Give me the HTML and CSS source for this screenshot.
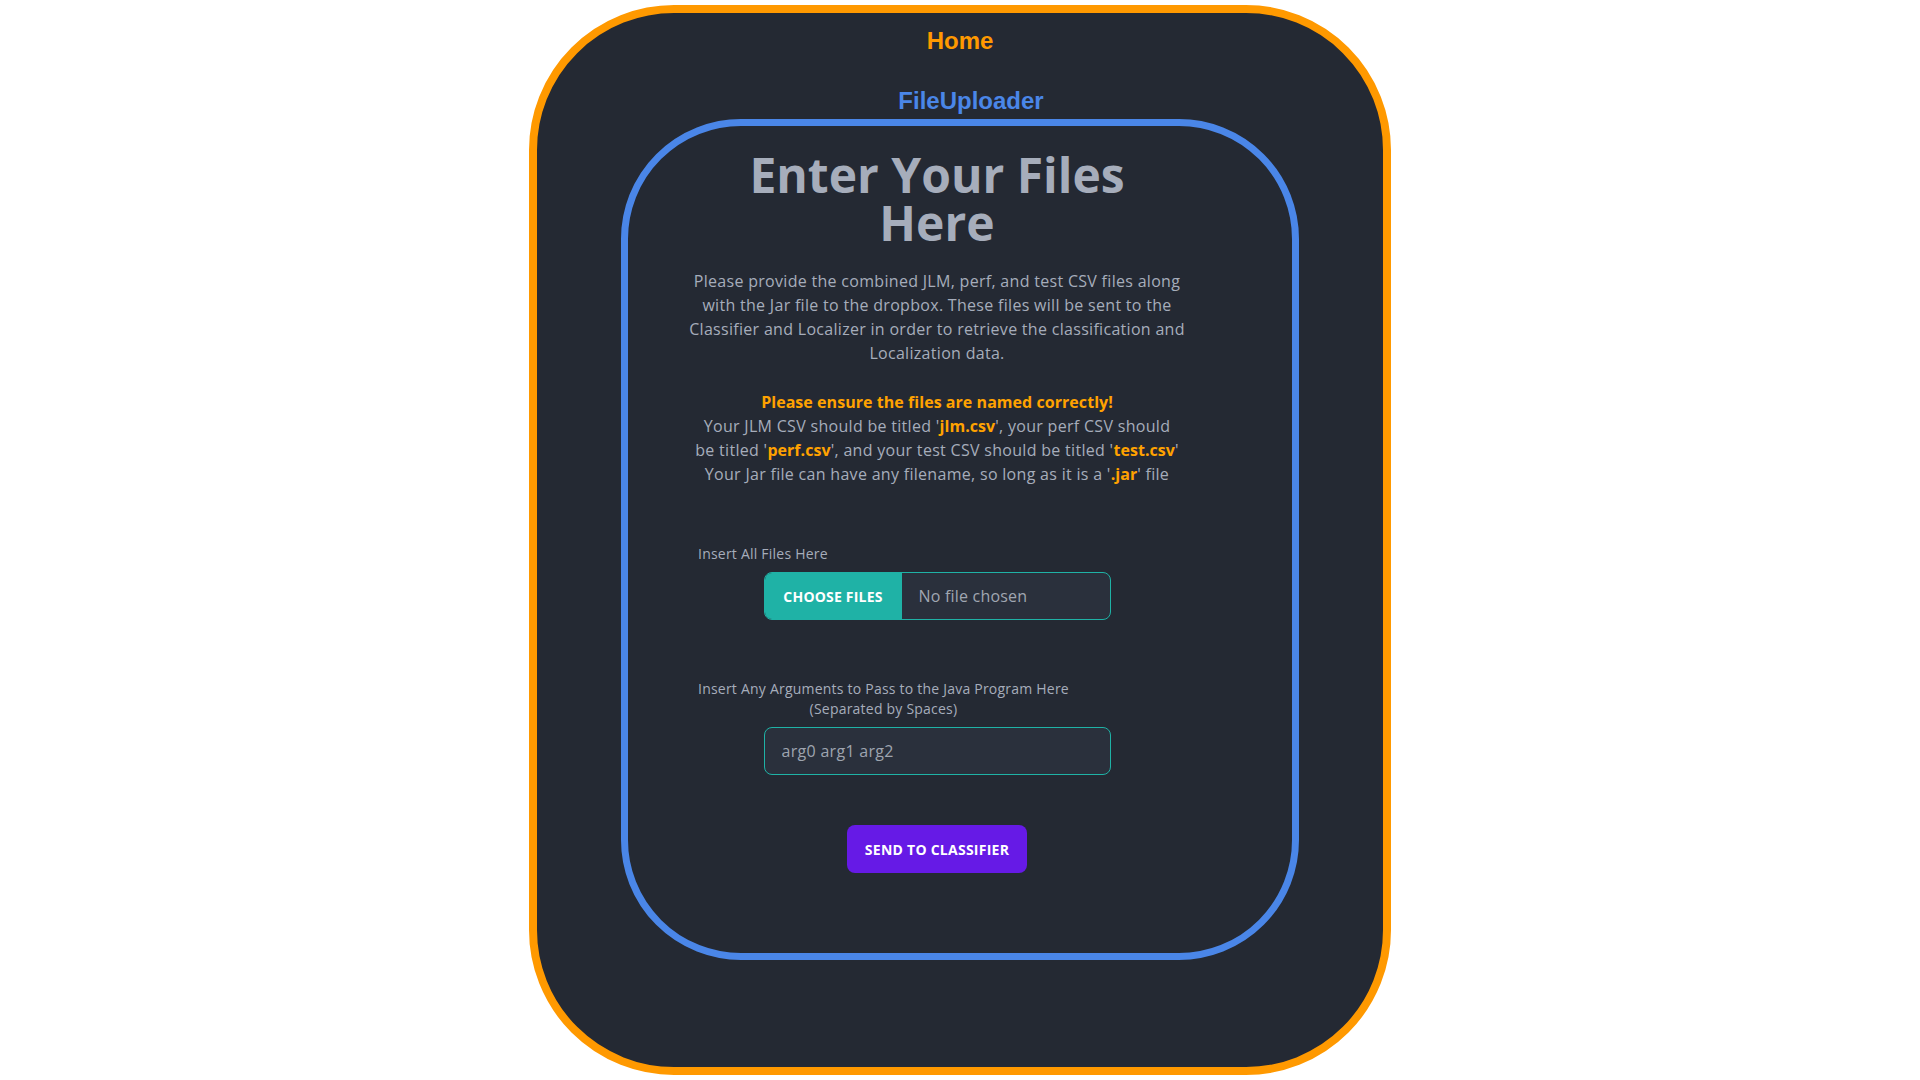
FILE: index.html
```html
<!DOCTYPE html>
<html lang="en">
<head>
<meta charset="utf-8">
<title>FileUploader</title>
<link rel="stylesheet" href="styles.css">
</head>
<body>
<div class="frame">
  <nav class="nav"><a class="home" href="#">Home</a></nav>
  <div class="brand">FileUploader</div>
  <main class="panel">
    <div class="column">
      <h1 class="title">Enter Your Files<br>Here</h1>
      <p class="intro">Please provide the combined JLM, perf, and test CSV files along<br>with the Jar file to the dropbox. These files will be sent to the<br>Classifier and Localizer in order to retrieve the classification and<br>Localization data.</p>
      <p class="rules"><strong class="warn">Please ensure the files are named correctly!</strong><br>Your JLM CSV should be titled '<b class="hl">jlm.csv</b>', your perf CSV should<br>be titled '<b class="hl">perf.csv</b>', and your test CSV should be titled '<b class="hl">test.csv</b>'<br>Your Jar file can have any filename, so long as it is a '<b class="hl">.jar</b>' file</p>

      <div class="field field-files">
        <div class="label"><span class="label-text">Insert All Files Here</span></div>
        <div class="file-input"><span class="file-btn">Choose Files</span><span class="file-name">No file chosen</span></div>
      </div>

      <div class="field field-args">
        <div class="label"><span class="label-text label-center">Insert Any Arguments to Pass to the Java Program Here<br>(Separated by Spaces)</span></div>
        <input class="text-input" type="text" placeholder="arg0 arg1 arg2">
      </div>

      <button class="send" type="button">Send to Classifier</button>
    </div>
  </main>
</div>
</body>
</html>
```

FILE: styles.css
```css
html, body {
  margin: 0;
  padding: 0;
  background: #ffffff;
}

body {
  font-family: "Open Sans", "Noto Sans", sans-serif;
  color: #a6adbb;
}

.frame {
  box-sizing: border-box;
  width: 862px;
  height: 1070px;
  margin: 5px auto 0;
  border: 8px solid #ff9900;
  border-radius: 145px;
  background: #242933;
  display: flex;
  flex-direction: column;
  align-items: center;
}

.nav {
  padding-top: 14px;
}

.home {
  display: block;
  font-family: "Liberation Sans", Arial, sans-serif;
  font-weight: 700;
  font-size: 24px;
  line-height: 28px;
  color: #ff9900;
  text-decoration: none;
}

.brand {
  margin-top: 32px;
  margin-left: 22px;
  font-family: "Liberation Sans", Arial, sans-serif;
  font-weight: 700;
  font-size: 24px;
  line-height: 28px;
  color: #4a86e8;
}

.panel {
  box-sizing: border-box;
  width: 678px;
  height: 841px;
  margin-top: 4px;
  border: 7px solid #4a86e8;
  border-radius: 120px;
  padding: 25px 46px 0 0;
  display: flex;
  flex-direction: column;
  align-items: center;
}

.column {
  width: 486px;
  display: flex;
  flex-direction: column;
  align-items: center;
}

.title {
  margin: 0;
  font-size: 48px;
  line-height: 48px;
  font-weight: 700;
  letter-spacing: 0;
  text-align: center;
  color: #a6adbb;
}

.intro,
.rules {
  margin: 22px 0 0;
  font-size: 16px;
  line-height: 24px;
  text-align: center;
  white-space: nowrap;
  letter-spacing: 0.3px;
  color: #a6adbb;
}

.rules {
  margin-top: 25px;
}

.warn,
.hl {
  font-weight: 700;
  letter-spacing: 0.05px;
  color: #ffa200;
}

.field {
  align-self: stretch;
  display: flex;
  flex-direction: column;
  align-items: center;
}

.field-files {
  margin-top: 50px;
}

.field-args {
  margin-top: 51px;
}

.label {
  align-self: stretch;
  display: flex;
  padding: 8px 4px;
}

.label-text {
  font-size: 14px;
  line-height: 20px;
  letter-spacing: 0.22px;
  color: #a6adbb;
}

.label-center {
  display: inline-block;
  text-align: center;
}

.file-input {
  box-sizing: border-box;
  width: 347px;
  height: 48px;
  display: flex;
  align-items: stretch;
  border: 1px solid #1fb2a6;
  border-radius: 8px;
  background: #2a303c;
  overflow: hidden;
}

.file-btn {
  width: 137px;
  display: flex;
  align-items: center;
  justify-content: center;
  background: #1fb2a6;
  color: #ffffff;
  font-size: 14px;
  font-weight: 700;
  letter-spacing: 0.2px;
  text-transform: uppercase;
}

.file-name {
  display: flex;
  align-items: center;
  padding-left: 17px;
  font-size: 16px;
  letter-spacing: 0.2px;
  color: #a0a6b1;
}

.text-input {
  box-sizing: border-box;
  width: 347px;
  height: 48px;
  margin: 0;
  padding: 0 16px 0 17px;
  border: 1px solid #1fb2a6;
  border-radius: 8px;
  background: #2a303c;
  font-family: "Open Sans", "Noto Sans", sans-serif;
  font-size: 16px;
  letter-spacing: 0.3px;
  color: #a6adbb;
  outline: none;
}

.text-input::placeholder {
  color: #9ea4af;
  opacity: 1;
}

.send {
  margin-top: 50px;
  width: 180px;
  height: 48px;
  padding: 0 12px;
  border: none;
  border-radius: 8px;
  background: #661ae6;
  color: #ffffff;
  font-family: "Open Sans", "Noto Sans", sans-serif;
  font-size: 14px;
  font-weight: 700;
  letter-spacing: 0.25px;
  text-transform: uppercase;
  cursor: pointer;
}
```
